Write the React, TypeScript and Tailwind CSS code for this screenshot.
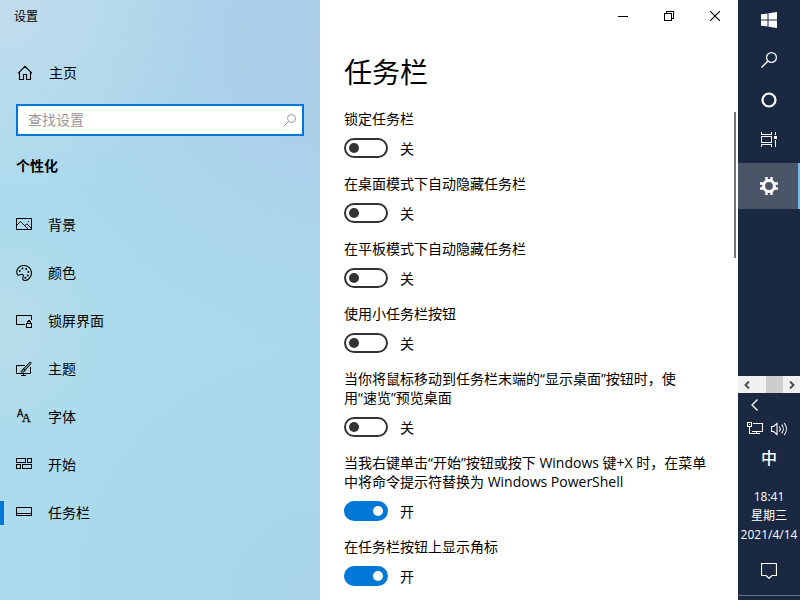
import { useState, type ReactNode } from "react";

const NAV_ITEMS = [
  { id: "background", label: "背景", icon: <PictureIcon /> },
  { id: "colors", label: "颜色", icon: <PaletteIcon /> },
  { id: "lockscreen", label: "锁屏界面", icon: <LockScreenIcon /> },
  { id: "themes", label: "主题", icon: <ThemeIcon /> },
  { id: "fonts", label: "字体", icon: <FontIcon /> },
  { id: "start", label: "开始", icon: <StartIcon /> },
  { id: "taskbar", label: "任务栏", icon: <TaskbarIcon /> },
];

const SETTINGS = [
  { id: "lock", label: "锁定任务栏", on: false },
  { id: "hide-desktop", label: "在桌面模式下自动隐藏任务栏", on: false },
  { id: "hide-tablet", label: "在平板模式下自动隐藏任务栏", on: false },
  { id: "small-buttons", label: "使用小任务栏按钮", on: false },
  { id: "peek", label: "当你将鼠标移动到任务栏末端的“显示桌面”按钮时，使用“速览”预览桌面", on: false },
  { id: "powershell", label: "当我右键单击“开始”按钮或按下 Windows 键+X 时，在菜单中将命令提示符替换为 Windows PowerShell", on: true },
  { id: "badges", label: "在任务栏按钮上显示角标", on: true },
];

function Icon({ children, crisp = false }: { children: ReactNode; crisp?: boolean }) {
  return (
    <svg
      className="w-4 h-4 shrink-0"
      viewBox="0 0 16 16"
      fill="none"
      stroke="currentColor"
      strokeWidth="1"
      shapeRendering={crisp ? "crispEdges" : "auto"}
      aria-hidden="true"
    >
      {children}
    </svg>
  );
}

function HomeIcon() {
  return (
    <Icon>
      <path d="M1 8.3 8 1.3l7 7M2.5 7v7.500h4v-5h3v5h4V7" strokeWidth="1.100" />
    </Icon>
  );
}

function PictureIcon() {
  return (
    <Icon>
      <path d="M.5 1.500h15v11H.5zM.5 8.500l4-4 8 8M8.800 8.800l2-2 4.700 4.700" />
      <path d="M12 4h1v1h-1z" fill="currentColor" stroke="none" />
    </Icon>
  );
}

function PaletteIcon() {
  return (
    <Icon>
      <path
        d="M1.200 9.200C-.6 4.600 3.200.5 8 .5c4.300 0 7.500 3.200 7.500 7.300 0 4.200-3 7.700-6.500 7.700-2.300 0-2.600-1.500-2-3 .7-1.800.4-3.200-1.300-3.200C4 9.300 2.600 11.400 1.200 9.200z"
        strokeWidth="1.100"
      />
      <g fill="currentColor" stroke="none">
        <circle cx="3.800" cy="6" r="1" />
        <circle cx="6.500" cy="3.500" r="1" />
        <circle cx="10.200" cy="4" r="1" />
        <circle cx="12.300" cy="7" r="1" />
        <circle cx="11.800" cy="10.500" r="1" />
        <circle cx="9.300" cy="12.800" r="1" />
      </g>
    </Icon>
  );
}

function LockScreenIcon() {
  return (
    <Icon crisp>
      <path d="M9 11.500H.5v-9h15V7" />
      <path d="M10.500 10.500h5v4h-5zM11.500 10.500v-2h1v-1h1v1h1v2" />
    </Icon>
  );
}

function ThemeIcon() {
  return (
    <Icon>
      <path d="M9 4.500H.5v8h14V6M7.500 12.500v2M5 14.500h5" />
      <path
        d="M14.800 1.300c.6.600.2 1.200-.2 1.700L9 9.400 7.400 8l5.800-6.200c.5-.5 1.100-1 1.600-.5zM7.400 8 9 9.400c-.2 1.600-1.700 2-4.200 1.500C6 10.200 5.700 8.400 7.400 8z"
        fill="#7f9ba6"
      />
    </Icon>
  );
}

function FontIcon() {
  return (
    <svg className="h-6 w-4 shrink-0" viewBox="0 -4 16 24" fill="currentColor" stroke="currentColor" strokeWidth=".3" aria-hidden="true">
      <text x="1" y="8" fontSize="10" fontFamily="Open Sans, sans-serif">A</text>
      <text x="6" y="13" fontSize="12" fontFamily="Liberation Serif, serif">A</text>
    </svg>
  );
}

function StartIcon() {
  return (
    <Icon crisp>
      <path d="M.5 1.500h9v4h-9zM11.500 1.500h4v4h-4zM.5 7.500h4v4h-4zM6.500 7.500h9v4h-9z" />
    </Icon>
  );
}

function TaskbarIcon() {
  return (
    <Icon crisp>
      <path d="M.5 2.500h15v8H.5zM.5 8.500h15" />
    </Icon>
  );
}

function SearchIcon() {
  return (
    <Icon>
      <circle cx="10.500" cy="5.500" r="4.900" strokeWidth="1.200" />
      <path d="m7 9-6.500 6.500" strokeWidth="1.300" />
    </Icon>
  );
}

function WindowsIcon() {
  return (
    <Icon>
      <path
        d="M0 2.300 6.500 1.400v6.100H0zM7.500 1.200 16 0v7.500H7.500zM0 8.500h6.500v6.100L0 13.700zM7.500 8.500H16V16l-8.500-1.200z"
        fill="currentColor"
        stroke="none"
      />
    </Icon>
  );
}

function CortanaIcon() {
  return (
    <Icon>
      <circle cx="8" cy="8" r="6.500" strokeWidth="2.200" />
    </Icon>
  );
}

function TaskViewIcon() {
  return (
    <Icon crisp>
      <path d="M.5 0v2.500h10V0M.5 4.500h10v6H.5zM.5 15v-2.500h10V15M14.500 0v3M14.500 8v7" />
      <path d="M13 4h3v3h-3z" fill="currentColor" stroke="none" />
    </Icon>
  );
}

function GearIcon() {
  return (
    <svg className="w-[18px] h-[18px]" viewBox="-9 -9 18 18" fill="none" stroke="currentColor" aria-hidden="true">
      <circle r="5.400" strokeWidth="3" />
      <path
        d="M2.500-5.800V-9M-2.500-5.800V-9M2.500 5.800V9M-2.500 5.800V9M5.800 2.500H9M5.800-2.500H9M-5.800 2.500H-9M-5.800-2.500H-9"
        strokeWidth="2.400"
      />
    </svg>
  );
}

function NetworkIcon() {
  return (
    <Icon crisp>
      <path d="M.5 1.500h4v4h-4zM2.500 5.500v7H6M6 2.500h9.500v8H4.500M9.500 10.500v2M6 12.500h7" />
      <path d="M2 3h1v1H2z" fill="currentColor" stroke="none" />
    </Icon>
  );
}

function VolumeIcon() {
  return (
    <Icon>
      <path
        d="M.5 5.500h2l3.500-3v11l-3.500-3h-2zM8.300 5.500c1.200 1.500 1.200 3.500 0 5M10.700 3.700c2.100 2.500 2.100 6.100 0 8.600M13.200 2c2.900 3.600 2.900 8.400 0 12"
        strokeWidth="1.100"
      />
    </Icon>
  );
}

function MessageIcon() {
  return (
    <Icon>
      <path d="M.5.500h15v12H11l-3 2.800-3-2.800H.5z" strokeWidth="1.200" />
    </Icon>
  );
}

function Chevron({ left = false }: { left?: boolean }) {
  return (
    <svg className="w-2 h-2" viewBox="0 0 8 8" fill="none" stroke="#4f4f4f" strokeWidth="2" aria-hidden="true">
      <path d={left ? "M6 .5 2.500 4 6 7.500" : "M2 .5 5.500 4 2 7.500"} />
    </svg>
  );
}

function ToggleRow({ id, label, on }: { id: string; label: string; on: boolean }) {
  const [checked, setChecked] = useState(on);

  return (
    <div>
      <label htmlFor={id} className="block leading-[19px]">
        {label}
      </label>
      <div className="mt-[10px] flex h-5 items-center gap-3">
        <input
          id={id}
          type="checkbox"
          role="switch"
          checked={checked}
          onChange={(e) => setChecked(e.target.checked)}
          className="flex h-5 w-11 appearance-none items-center rounded-full border-2 border-[#333] px-[3px] before:h-[10px] before:w-[10px] before:rounded-full before:bg-[#333] before:content-[''] checked:justify-end checked:border-[#0078d7] checked:bg-[#0078d7] checked:before:bg-white"
        />
        <span className="pt-[2px]">{checked ? "开" : "关"}</span>
      </div>
    </div>
  );
}

function Sidebar() {
  const [active, setActive] = useState("taskbar");

  return (
    <aside className="w-80 shrink-0 bg-[#abdbed] bg-[radial-gradient(circle_at_0%_0%,#c2dcec_0%,transparent_30%),radial-gradient(circle_at_100%_8%,#abcde8_0%,#abcde800_50%),radial-gradient(circle_at_0%_55%,#b9dce8_0%,transparent_24%),radial-gradient(circle_at_100%_100%,#a8d3e8_0%,transparent_45%)]">
      <header className="flex h-8 items-center px-[14px] pt-[2px] text-xs">设置</header>
      <a href="#home" className="mt-4 flex h-12 items-center gap-4 px-[17px] pt-[2px]">
        <HomeIcon />
        主页
      </a>
      <div className="mx-4 mt-2 flex h-8 items-center border-2 border-[#0078d7] bg-white pr-[6px] pl-[10px] text-[#999]">
        <input
          type="text"
          aria-label="查找设置"
          placeholder="查找设置"
          className="min-w-0 flex-1 bg-transparent text-black outline-none placeholder:text-[#999]"
        />
        <svg className="h-[13px] w-[13px]" viewBox="0 0 13 13" fill="none" stroke="currentColor" aria-hidden="true">
          <circle cx="8.500" cy="4.500" r="4" />
          <path d="M5.600 7.400.5 12.500" />
        </svg>
      </div>
      <h2 className="mt-5 px-4 leading-5 font-bold">个性化</h2>
      <nav className="mt-[25px]">
        {NAV_ITEMS.map((item) => (
          <a
            key={item.id}
            href={`#${item.id}`}
            onClick={() => setActive(item.id)}
            className="flex h-12 items-center"
          >
            <span className={`h-6 w-1 ${active === item.id ? "bg-[#0078d7]" : ""}`} />
            <span className="ml-3 flex items-center gap-4">
              {item.icon}
              {item.label}
            </span>
          </a>
        ))}
      </nav>
    </aside>
  );
}

function WindowButtons() {
  return (
    <div className="flex justify-end">
      <button type="button" aria-label="最小化" className="flex h-8 w-[46px] items-center justify-center">
        <svg className="h-[10px] w-[10px]" viewBox="0 0 10 10" stroke="currentColor" shapeRendering="crispEdges">
          <path d="M0 5.500h10" />
        </svg>
      </button>
      <button type="button" aria-label="还原" className="flex h-8 w-[46px] items-center justify-center">
        <svg className="h-[10px] w-[10px]" viewBox="0 0 10 10" fill="none" stroke="currentColor" shapeRendering="crispEdges">
          <path d="M.5 2.500h7v7h-7zM2.500 2.500v-2h7v7h-2" />
        </svg>
      </button>
      <button type="button" aria-label="关闭" className="flex h-8 w-[46px] items-center justify-center">
        <svg className="h-[10px] w-[10px]" viewBox="0 0 10 10" stroke="currentColor" strokeWidth="1.100">
          <path d="m0 0 10 10M10 0 0 10" />
        </svg>
      </button>
    </div>
  );
}

function Taskbar() {
  return (
    <aside className="flex w-[62px] shrink-0 flex-col bg-[#1a2842] text-white">
      <button type="button" aria-label="开始" className="flex h-10 items-center justify-center">
        <WindowsIcon />
      </button>
      <button type="button" aria-label="搜索" className="flex h-10 items-center justify-center">
        <SearchIcon />
      </button>
      <button type="button" aria-label="Cortana" className="flex h-10 items-center justify-center">
        <CortanaIcon />
      </button>
      <button type="button" aria-label="任务视图" className="flex h-10 items-center justify-center">
        <TaskViewIcon />
      </button>
      <button
        type="button"
        aria-label="设置"
        className="mt-[3px] flex h-[46px] items-center justify-center border-r-2 border-[#76b9ed] bg-[#4a5568] pl-[2px]"
      >
        <GearIcon />
      </button>

      {/* Tray */}
      <div className="mt-auto flex h-[17px] bg-[#f0f0f0]">
        <button type="button" aria-label="向左滚动" className="flex w-[17px] items-center justify-center">
          <Chevron left />
        </button>
        <div className="flex flex-1 justify-end">
          <div className="w-[17px] bg-[#cdcdcd]" />
        </div>
        <button type="button" aria-label="向右滚动" className="flex w-[17px] items-center justify-center">
          <Chevron />
        </button>
      </div>
      <button type="button" aria-label="显示隐藏的图标" className="flex h-6 items-center pl-[13px]">
        <svg className="h-3 w-2" viewBox="0 0 8 12" fill="none" stroke="currentColor" strokeWidth="1.300">
          <path d="M6.500.5 1 6l5.500 5.500" />
        </svg>
      </button>
      <div className="flex h-6 items-center justify-center gap-2 pr-1">
        <button type="button" aria-label="网络">
          <NetworkIcon />
        </button>
        <button type="button" aria-label="音量">
          <VolumeIcon />
        </button>
      </div>
      <button type="button" className="h-8 pt-[2px] text-base font-medium">中</button>
      <div className="mt-[14px] flex flex-col items-center text-xs leading-[19px] whitespace-nowrap">
        <div>18:41</div>
        <div>星期三</div>
        <div>2021/4/14</div>
      </div>
      <button type="button" aria-label="通知" className="mt-1 flex h-[47px] items-center justify-center pb-[2px]">
        <MessageIcon />
      </button>
      <button type="button" aria-label="显示桌面" className="h-[5px] border-t border-[#66728a]" />
    </aside>
  );
}

export default function App() {
  return (
    <div className="flex min-h-screen bg-white font-['Open_Sans','Noto_Sans_CJK_SC',sans-serif] text-sm text-black">
      <Sidebar />
      <main className="min-w-0 flex-1">
        <WindowButtons />
        <div className="flex">
          <div className="min-w-0 flex-1 pt-[22px] pl-6">
            <h1 className="text-[28px] leading-9">任务栏</h1>
            <div className="mt-[19px] flex flex-col gap-4 pr-[26px]">
              {SETTINGS.map((item) => (
                <ToggleRow key={item.id} {...item} />
              ))}
            </div>
          </div>
          {/* Scroll thumb */}
          <div className="mt-20 mr-[2px] h-[146px] w-[2px] bg-[#767676]" />
        </div>
      </main>
      <Taskbar />
    </div>
  );
}
